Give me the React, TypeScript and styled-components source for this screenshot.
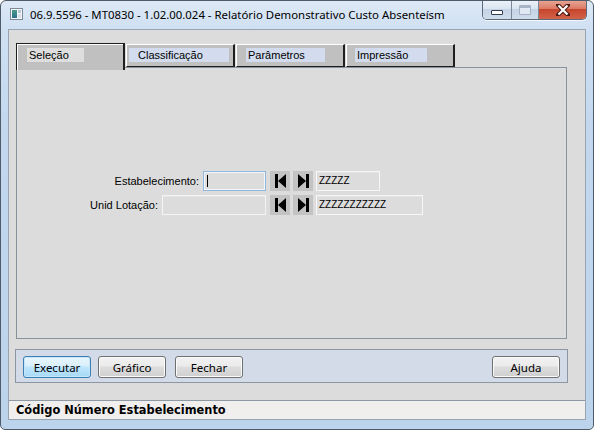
import React from 'react';
import styled, { createGlobalStyle, css } from 'styled-components';

const GlobalStyle = createGlobalStyle`
  html, body { margin: 0; padding: 0; background: #ffffff; }
  body { width: 594px; height: 430px; overflow: hidden; }
  * { box-sizing: border-box; }
`;

const Window = styled.div`
  width: 594px;
  height: 430px;
  display: flex;
  flex-direction: column;
  border: 1px solid #4f5b68;
  border-radius: 6px 6px 5px 5px;
  background: linear-gradient(to bottom, #dde9f6 0px, #cfe0f2 28px, #c3d8ef 120px, #bcd3ec 100%);
  padding: 0 7px 9px 7px;
  font-family: "Liberation Sans", Arial, sans-serif;
  overflow: hidden;
`;

const TitleBar = styled.div`
  height: 28px;
  flex-shrink: 0;
  display: flex;
  align-items: flex-start;
`;

const AppIcon = styled.svg`
  margin: 7px 0 0 2px;
  flex-shrink: 0;
`;

const TitleText = styled.div`
  margin-left: 7px;
  line-height: 28px;
  font-family: "Noto Sans", "Open Sans", sans-serif;
  font-size: 11.4px;
  color: #000;
  white-space: nowrap;
`;

const CaptionGroup = styled.div`
  margin-left: auto;
  margin-right: -1px;
  margin-top: -1px;
  display: flex;
  height: 20px;
  border: 1px solid #5d6a79;
  border-top: none;
  border-radius: 0 0 5px 5px;
  overflow: hidden;
  box-shadow: 0 1px 0 rgba(255, 255, 255, 0.7);
`;

const CaptionBtn = styled.div<{ $w: number; $close?: boolean }>`
  width: ${({ $w }) => $w}px;
  height: 100%;
  display: flex;
  align-items: center;
  justify-content: center;
  border-left: 1px solid #7c8898;
  &:first-child { border-left: none; }
  ${({ $close }) =>
    $close
      ? css`
          background: linear-gradient(to bottom, #e9a99a 0%, #dc7b66 45%, #c7452d 50%, #d2624a 100%);
        `
      : css`
          background: linear-gradient(to bottom, #eef3f9 0%, #dbe5f1 45%, #c4d3e6 50%, #cfdceb 100%);
        `}
`;

const MinGlyph = styled.div`
  width: 12px;
  height: 5px;
  margin-top: 6px;
  background: #ffffff;
  border: 1px solid #2f3d4d;
  border-radius: 1px;
`;

const MaxGlyph = styled.div`
  width: 12px;
  height: 10px;
  border: 1px solid #9aa8b8;
  border-top-width: 3px;
  background: #e6edf5;
  border-radius: 1px;
  opacity: 0.8;
`;

const Client = styled.div`
  flex: 1;
  display: flex;
  flex-direction: column;
  background: #dcdcdc;
  border: 1px solid #98a4b2;
`;

const Content = styled.div`
  padding: 13px 18px 0 7px;
`;

const TabRow = styled.div`
  display: flex;
  gap: 1px;
  height: 24px;
  align-items: flex-start;
  position: relative;
  z-index: 1;
`;

const Tab = styled.div<{ $active?: boolean }>`
  width: 109px;
  background: #c0c0c0;
  display: flex;
  ${({ $active }) =>
    $active
      ? css`
          height: 27px;
          border: 1px solid #1e1e1e;
          border-bottom: none;
          border-right-width: 2px;
          box-shadow: inset 1px 1px 0 #ffffff;
          padding-top: 4px;
        `
      : css`
          height: 23px;
          margin-top: 1px;
          border-top: 1px solid #ffffff;
          border-left: 1px solid #ffffff;
          border-right: 2px solid #1e1e1e;
          border-bottom: 1px solid #1e1e1e;
          padding-top: 3px;
        `}
`;

const TabLabel = styled.div<{ $active?: boolean; $left: number; $w: number; $indent: number }>`
  margin-left: ${({ $left }) => $left}px;
  width: ${({ $w }) => $w}px;
  height: 14px;
  padding-left: ${({ $indent }) => $indent}px;
  background: ${({ $active }) => ($active ? '#dedede' : '#d2dcee')};
  font-size: 11px;
  line-height: 14px;
  color: #000;
  white-space: nowrap;
`;

const Panel = styled.div`
  height: 272px;
  border: 1px solid #8a929b;
  padding: 103px 0 0 0;
  display: flex;
  flex-direction: column;
  gap: 4px;
`;

const FieldRow = styled.div`
  display: flex;
  align-items: center;
  height: 20px;
`;

const LeftGroup = styled.div`
  width: 249px;
  display: flex;
  justify-content: flex-end;
  align-items: center;
  gap: 4px;
`;

const Label = styled.span`
  font-size: 11px;
  color: #000;
  white-space: nowrap;
`;

const Input = styled.div<{ $w: number; $focused?: boolean }>`
  width: ${({ $w }) => $w}px;
  height: 20px;
  background: #dcdcdc;
  border: 1px solid ${({ $focused }) => ($focused ? '#8fb6dc' : '#f4f4f4')};
  box-shadow: ${({ $focused }) => ($focused ? 'inset 0 0 0 1px #f3f7fb' : 'inset 0 1px 0 #e6e6e6')};
  position: relative;
`;

const Caret = styled.div`
  position: absolute;
  left: 3px;
  top: 3px;
  width: 1px;
  height: 12px;
  background: #000;
`;

const NavGroup = styled.div`
  display: flex;
  gap: 3px;
  margin-left: 4px;
`;

const NavBtn = styled.div`
  width: 20px;
  height: 20px;
  background: #c3c3c3;
  display: flex;
  align-items: center;
  justify-content: center;
`;

const ValueField = styled.div<{ $w: number }>`
  margin-left: 3px;
  width: ${({ $w }) => $w}px;
  height: 20px;
  background: #dcdcdc;
  border: 1px solid #f6f6f6;
  box-shadow: inset 0 1px 0 #e4e4e4;
  font-size: 10px;
  line-height: 18px;
  padding-left: 2px;
  color: #000;
`;

const ButtonBar = styled.div`
  margin: 10px -1px 0 -1px;
  height: 34px;
  background: #d3dbe9;
  border: 1px solid #8c96a3;
  padding: 6px 7px 0 7px;
  display: flex;
  align-items: flex-start;
`;

const Button = styled.div<{ $primary?: boolean; $gap?: number }>`
  width: 68px;
  height: 22px;
  margin-left: ${({ $gap }) => ($gap ?? 0)}px;
  border-radius: 3px;
  display: flex;
  align-items: center;
  justify-content: center;
  font-family: "Noto Sans", "Open Sans", sans-serif;
  font-size: 11.5px;
  color: #000;
  ${({ $primary }) =>
    $primary
      ? css`
          border: 1px solid #3c7fb1;
          background: linear-gradient(to bottom, #eaf6fd 0%, #d9f0fc 45%, #bee6fd 50%, #a7d9f5 100%);
          box-shadow: inset 0 0 0 1px #c5e6f8;
        `
      : css`
          border: 1px solid #707070;
          background: linear-gradient(to bottom, #f2f2f2 0%, #ebebeb 45%, #dddddd 50%, #cfcfcf 100%);
          box-shadow: inset 0 0 0 1px #fbfbfb;
        `}
`;

const Spacer = styled.div`
  flex: 1;
`;

const StatusBar = styled.div`
  margin-top: auto;
  height: 19px;
  border-top: 1px solid #8e99a6;
  background: #f1efed;
  padding-left: 7px;
  font-family: "DejaVu Sans", Verdana, sans-serif;
  font-weight: bold;
  font-size: 11.4px;
  line-height: 18px;
  color: #000;
  white-space: nowrap;
`;

const FirstIcon = () => (
  <svg width="11" height="14" viewBox="0 0 11 14">
    <rect x="0" y="0" width="3" height="14" fill="#000" />
    <polygon points="3,7 11,0 11,14" fill="#000" />
  </svg>
);

const LastIcon = () => (
  <svg width="11" height="14" viewBox="0 0 11 14">
    <polygon points="0,0 8,7 0,14" fill="#000" />
    <rect x="8" y="0" width="3" height="14" fill="#000" />
  </svg>
);

const tabs = [
  { label: 'Seleção', left: 10, w: 57, indent: 2, active: true },
  { label: 'Classificação', left: 2, w: 100, indent: 9 },
  { label: 'Parâmetros', left: 9, w: 79, indent: 2 },
  { label: 'Impressão', left: 8, w: 72, indent: 2 },
];

export default function App() {
  return (
    <>
      <GlobalStyle />
      <Window>
        <TitleBar>
          <AppIcon width="13" height="12" viewBox="0 0 13 12">
            <defs>
              <linearGradient id="ig" x1="0" y1="0" x2="0" y2="1">
                <stop offset="0" stopColor="#4a9a8a" />
                <stop offset="1" stopColor="#2d6f8f" />
              </linearGradient>
            </defs>
            <rect x="0.5" y="0.5" width="12" height="11" fill="#f4f6f8" stroke="#7b8a99" />
            <rect x="2" y="2" width="5" height="8" fill="url(#ig)" />
            <rect x="8" y="2" width="3" height="3" fill="#b9c6d3" />
            <rect x="8" y="6" width="3" height="4" fill="#d8e0e8" />
          </AppIcon>
          <TitleText>06.9.5596 - MT0830 - 1.02.00.024 - Relatório Demonstrativo Custo Absenteísm</TitleText>
          <CaptionGroup>
            <CaptionBtn $w={28}>
              <MinGlyph />
            </CaptionBtn>
            <CaptionBtn $w={27}>
              <MaxGlyph />
            </CaptionBtn>
            <CaptionBtn $w={48} $close>
              <svg width="14" height="12" viewBox="0 0 14 12">
                <path d="M2 1 L12 11 M12 1 L2 11" stroke="#4a1c14" strokeWidth="4.2" strokeLinecap="square" />
                <path d="M2.5 1.5 L11.5 10.5 M11.5 1.5 L2.5 10.5" stroke="#ffffff" strokeWidth="2.2" />
              </svg>
            </CaptionBtn>
          </CaptionGroup>
        </TitleBar>
        <Client>
          <Content>
            <TabRow>
              {tabs.map((t) => (
                <Tab key={t.label} $active={t.active}>
                  <TabLabel $active={t.active} $left={t.left} $w={t.w} $indent={t.indent}>
                    {t.label}
                  </TabLabel>
                </Tab>
              ))}
            </TabRow>
            <Panel>
              <FieldRow>
                <LeftGroup>
                  <Label>Estabelecimento:</Label>
                  <Input $w={63} $focused>
                    <Caret />
                  </Input>
                </LeftGroup>
                <NavGroup>
                  <NavBtn><FirstIcon /></NavBtn>
                  <NavBtn><LastIcon /></NavBtn>
                </NavGroup>
                <ValueField $w={64}>ZZZZZ</ValueField>
              </FieldRow>
              <FieldRow>
                <LeftGroup>
                  <Label>Unid Lotação:</Label>
                  <Input $w={104} />
                </LeftGroup>
                <NavGroup>
                  <NavBtn><FirstIcon /></NavBtn>
                  <NavBtn><LastIcon /></NavBtn>
                </NavGroup>
                <ValueField $w={107}>ZZZZZZZZZZZ</ValueField>
              </FieldRow>
            </Panel>
            <ButtonBar>
              <Button $primary>Executar</Button>
              <Button $gap={7}>Gráfico</Button>
              <Button $gap={9}>Fechar</Button>
              <Spacer />
              <Button>Ajuda</Button>
            </ButtonBar>
          </Content>
          <StatusBar>Código Número Estabelecimento</StatusBar>
        </Client>
      </Window>
    </>
  );
}
